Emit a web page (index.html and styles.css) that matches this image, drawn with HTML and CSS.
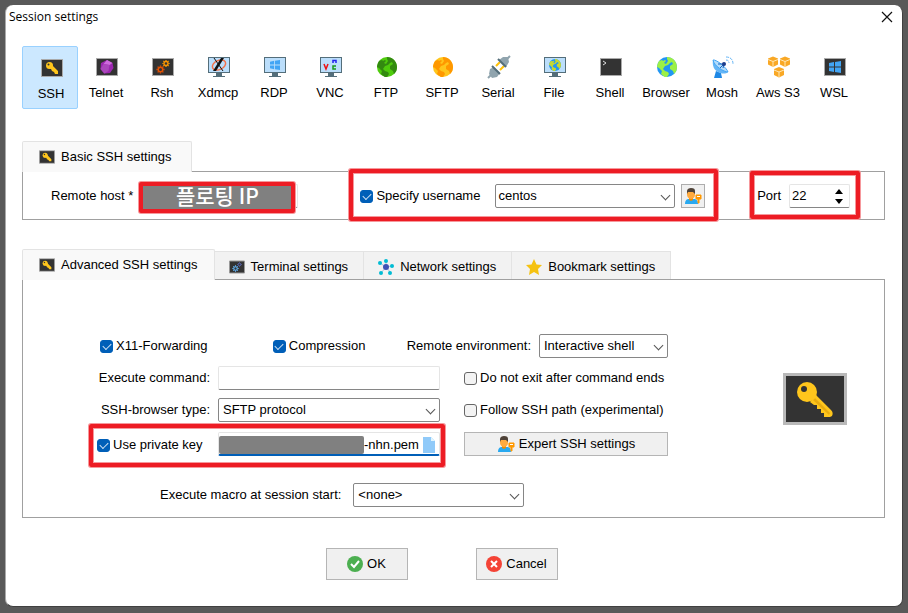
FILE: index.html
```html
<!DOCTYPE html>
<html lang="en">
<head>
<meta charset="UTF-8">
<meta name="viewport" content="width=device-width, initial-scale=1.0">
<title>Session settings</title>
<link rel="stylesheet" href="styles.css">
</head>
<body>

<!-- shared icon shapes -->
<svg class="symbols" width="0" height="0" aria-hidden="true">
  <symbol id="screen" viewBox="0 0 24 24">
    <rect x="1.5" y="3.5" width="21" height="17" fill="#333" stroke="#aaa"/>
  </symbol>
  <symbol id="monitor" viewBox="0 0 24 24">
    <path d="M9 18h6v3h3v1H6v-1h3z" fill="#546e7a"/>
    <rect x="1.5" y="2.5" width="21" height="15" fill="#bbdefb" stroke="#546e7a"/>
  </symbol>
  <symbol id="key" viewBox="0 0 64 52">
    <rect x="1.5" y="1.5" width="61" height="49" fill="#333" stroke="#b9b9b9" stroke-width="3"/>
    <path d="M33 22l15 15c2 2 2 4 1 6l-2 1h-6v-4h-3v-4h-4v-4h-3l-4-3z" fill="#ffc61c"/>
    <path d="M32 25l15 15-1 2-16-15z" fill="#e8ab10"/>
    <circle cx="24" cy="19" r="10" fill="#ffc61c"/>
    <circle cx="21" cy="16" r="3" fill="#333"/>
  </symbol>
  <symbol id="key-small" viewBox="0 0 22 18">
    <rect x=".5" y=".5" width="21" height="17" fill="#333" stroke="#aaa"/>
    <path d="M10 5l7 7v3h-3l-1-2-2-1-1-2-3-1z" fill="#ffc61c"/>
    <circle cx="8.500" cy="6.500" r="3.500" fill="#ffc61c"/>
    <circle cx="7.500" cy="5.500" r="1" fill="#333"/>
  </symbol>
  <symbol id="land" viewBox="0 0 20 20">
    <path d="M10 0c5 0 10 4 10 10 0 3-1 5-3 7l-1-3-3-2 0-3 3-2-1-2-2 1-2 2-3 1-2 3 2 2 3 1 1 2-2 3 0 2C7 19 5 18 4 17l1-3-3-3-2-1c0-2 1-4 2-6l3-1 1 1 2-1 1 1-2 2 2 1 2-3-1-2z"/>
  </symbol>
  <symbol id="gear" viewBox="0 0 10 10">
    <circle cx="5" cy="5" r="2.5" fill="none" stroke="currentColor" stroke-width="1.6"/>
    <path d="M5 .5v1.5M5 8v1.500M.5 5h1.500M8 5h1.500M1.800 1.800l1 1M7.200 7.200l1 1M8.200 1.800l-1 1M2.800 7.200l-1 1" stroke="currentColor" stroke-width="1.500"/>
  </symbol>
  <symbol id="user" viewBox="0 0 18 18">
    <path d="M1 17c0-4 2-5 4-5h5c2 0 4 1 4 5z" fill="#29a9f0"/>
    <path d="M5 10h4v3l-2 1-2-1z" fill="#f08c00"/>
    <path d="M3 5h8v3c0 2-2 4-4 4s-4-2-4-4z" fill="#ffab40"/>
    <path d="M3 7V4c0-2 2-3 4-3 3 0 4 1 4 3v3l-2-2H4z" fill="#4e4238"/>
    <path d="M12 8h5v4h-2v4h-1v-4h-2z" fill="#ff9800" stroke="#ff9800"/>
    <path d="M13 9h3v1h-3z" fill="#fff"/>
  </symbol>
  <symbol id="windows" viewBox="0 0 12 12">
    <path d="M0 2l5-1v4.500H0zM6 1l6-1v5.500H6zM0 6.500h5V11l-5-1zM6 6.500h6V12l-6-1z" fill="#42a5f5"/>
  </symbol>
</svg>

<main class="dialog">
  <header class="titlebar">
    <h1>Session settings</h1>
    <button type="button" class="close" aria-label="Close">
      <svg width="12" height="12" viewBox="0 0 12 12"><path d="M1 1l10 10M11 1L1 11" stroke="#111" stroke-width="1.200"/></svg>
    </button>
  </header>

  <form class="content">
    <nav class="session-types">
      <button type="button" class="type selected">
        <svg viewBox="0 0 24 24"><use href="#key-small" x="1" y="3" width="22" height="18"/></svg>
        SSH
      </button>
      <button type="button" class="type">
        <svg viewBox="0 0 24 24"><use href="#screen"/><path d="M12 5l5.500 3 1 5-3.500 5-6 .5L5.500 14l.5-6z" fill="#9c27b0"/><path d="M12 5l5.500 3-3 2-6-1z" fill="#ce6bdd"/><path d="M8.500 9l6 1-1 6-4 2.500-4-4.500z" fill="#ab47bc"/></svg>
        Telnet
      </button>
      <button type="button" class="type">
        <svg viewBox="0 0 24 24"><use href="#screen"/><use href="#gear" x="5" y="10" width="9" height="9" color="#e65100"/><use href="#gear" x="11" y="4.500" width="8" height="8" color="#ff9800"/></svg>
        Rsh
      </button>
      <button type="button" class="type">
        <svg viewBox="0 0 24 24"><use href="#monitor"/><ellipse cx="12" cy="10" rx="7" ry="4.500" transform="rotate(-25 12 10)" fill="none" stroke="#f4724b" stroke-width="1.500"/><path d="M14 3h3L9 16H6z" fill="#111"/><path d="M7 3l9 13" stroke="#111"/></svg>
        Xdmcp
      </button>
      <button type="button" class="type">
        <svg viewBox="0 0 24 24"><use href="#monitor"/><use href="#windows" x="7" y="5" width="10" height="10"/></svg>
        RDP
      </button>
      <button type="button" class="type">
        <svg viewBox="0 0 24 24"><use href="#monitor"/><path d="M5 9l2 5 2-5" fill="none" stroke="#e11" stroke-width="1.500"/><path d="M14 8V5.500h3V8" fill="none" stroke="#22e" stroke-width="1.500"/><path d="M17 11h-3v3h3" fill="none" stroke="#1a9a1a" stroke-width="1.500"/></svg>
        VNC
      </button>
      <button type="button" class="type">
        <svg viewBox="0 0 24 24"><circle cx="12" cy="12" r="10" fill="#4ecb0c"/><use href="#land" x="2" y="2" width="20" height="20" fill="#338a10"/></svg>
        FTP
      </button>
      <button type="button" class="type">
        <svg viewBox="0 0 24 24"><circle cx="12" cy="12" r="10" fill="#ffc61c"/><use href="#land" x="2" y="2" width="20" height="20" fill="#ff9800"/></svg>
        SFTP
      </button>
      <button type="button" class="type">
        <svg viewBox="0 0 24 24"><path d="M1 23l4-4M19 5l4-4" stroke="#90a4ae" stroke-width="2"/><path d="M9 11l4-4M13 15l4-4" stroke="#ffc107" stroke-width="2"/><path d="M3 14l4-2 6 6-3 4-5 1-3-4zM12 5l4-3 5 0 1 5-3 5z" fill="#90a4ae"/><path d="M5 11l8 8M11 4l8 8" stroke="#546e7a" stroke-width="2"/></svg>
        Serial
      </button>
      <button type="button" class="type">
        <svg viewBox="0 0 24 24"><use href="#monitor"/><circle cx="12" cy="10" r="6" fill="#2196f3"/><use href="#land" x="6" y="4" width="12" height="12" fill="#c6d82f"/></svg>
        File
      </button>
      <button type="button" class="type">
        <svg viewBox="0 0 24 24"><use href="#screen"/><path d="M4 6l3 2-3 2" fill="none" stroke="#ddd"/></svg>
        Shell
      </button>
      <button type="button" class="type">
        <svg viewBox="0 0 24 24"><circle cx="12" cy="12" r="10" fill="#2196f3"/><use href="#land" x="2" y="2" width="20" height="20" fill="#9cf046"/></svg>
        Browser
      </button>
      <button type="button" class="type">
        <svg viewBox="0 0 24 24"><path d="M5 16l5 2 1 5H3z" fill="#1e88e5"/><path d="M2 5c-1 5 1 10 5 12s8 2 10 0z" fill="#64b5f6"/><path d="M2 5c3-1 14 8 15 12-4 0-14-6-15-12z" fill="#b3dcfb" stroke="#42a5f5"/><path d="M7 9l6 0-1 4M13 9l-4 4" stroke="#1565c0" fill="none"/><circle cx="13" cy="9" r="2" fill="#1a3c8c"/><path d="M15 5c2 0 3 1 3 3M15 2c4 0 7 2 7 7" fill="none" stroke="#64b5f6" stroke-dasharray="3 1"/></svg>
        Mosh
      </button>
      <button type="button" class="type">
        <svg viewBox="0 0 24 24"><path d="M1 3.500l5-2 5 2v6l-5 2.500-5-2.500zM13 3.500l5-2 5 2v6L18 12l-5-2.500zM7 14l5-2 5 2v6l-5 2.500L7 20z" fill="#f9a825"/><path d="M1 4.500l5 2 5-2M6 6.500V12M13 4.500l5 2 5-2M18 6.500V12M7 15l5 2 5-2M12 17v5.500" fill="none" stroke="#ffe6b3"/></svg>
        Aws S3
      </button>
      <button type="button" class="type">
        <svg viewBox="0 0 24 24"><use href="#screen"/><use href="#windows" x="6" y="6" width="12" height="12"/></svg>
        WSL
      </button>
    </nav>

    <section class="basic">
      <div class="tabs">
        <button type="button" class="tab active"><svg width="16" height="16" viewBox="0 0 16 16"><use href="#key-small" y="1" width="16" height="14"/></svg>Basic SSH settings</button>
      </div>
      <div class="panel host-row">
        <label for="host">Remote host *</label>
        <div class="host-field">
          <input type="text" id="host" class="field">
          <span class="host-cover">플로팅 IP</span>
        </div>
        <div class="user-group mark">
          <label class="check"><input type="checkbox" checked> Specify username</label>
          <div class="select-box">
            <select aria-label="Username"><option>centos</option></select>
          </div>
          <button type="button" class="user-button" aria-label="Manage users"><svg width="18" height="18"><use href="#user"/></svg></button>
        </div>
        <div class="port-group mark">
          <label for="port">Port</label>
          <div class="spinner field">
            <input type="number" id="port" value="22">
            <div class="arrows">
              <button type="button" aria-label="Increase port"><svg width="8" height="5" viewBox="0 0 8 5"><path d="M0 5l4-5 4 5z"/></svg></button>
              <button type="button" aria-label="Decrease port"><svg width="8" height="5" viewBox="0 0 8 5"><path d="M0 0l4 5 4-5z"/></svg></button>
            </div>
          </div>
        </div>
      </div>
    </section>

    <section class="advanced">
      <div class="tabs">
        <button type="button" class="tab active"><svg width="16" height="16" viewBox="0 0 16 16"><use href="#key-small" y="1" width="16" height="14"/></svg>Advanced SSH settings</button>
        <button type="button" class="tab"><svg width="16" height="16" viewBox="0 0 16 16"><path d="M.5 2h15v12H.5z" fill="#333" stroke="#999"/><use href="#gear" x="3" y="6" width="7" height="7" color="#64b5f6"/><use href="#gear" x="8" y="3" width="5" height="5" color="#5c6bc0"/></svg>Terminal settings</button>
        <button type="button" class="tab"><svg width="16" height="16" viewBox="0 0 16 16"><path d="M8 8V2M8 8L2 4M8 8l-5 6M8 8l5 6M8 8l6-1" stroke="#a9c6dc"/><g fill="#00bcd4"><circle cx="8" cy="2" r="2"/><circle cx="2" cy="4" r="2"/><circle cx="3" cy="14" r="2"/><circle cx="12" cy="14" r="2"/><circle cx="14" cy="7" r="2"/></g><circle cx="8" cy="8" r="3" fill="#3f51b5"/></svg>Network settings</button>
        <button type="button" class="tab"><svg width="16" height="16" viewBox="0 0 16 16"><path d="M8 0l2.500 5.500 5.500.5-4 4 1 6-5-3-5 3 1-6-4-4 5.500-.5z" fill="#f5c211"/></svg>Bookmark settings</button>
      </div>
      <div class="panel advanced-panel">
        <div class="options">
          <div class="option-row">
            <label class="check"><input type="checkbox" checked> X11-Forwarding</label>
            <label class="check"><input type="checkbox" checked> Compression</label>
            <div class="environment">
              <label for="environment">Remote environment:</label>
              <div class="select-box">
                <select id="environment"><option>Interactive shell</option></select>
              </div>
            </div>
          </div>

          <div class="option-grid">
            <label for="command">Execute command:</label>
            <input type="text" id="command" class="field">
            <label class="check"><input type="checkbox"> Do not exit after command ends</label>

            <label for="browser">SSH-browser type:</label>
            <div class="select-box">
              <select id="browser"><option>SFTP protocol</option></select>
            </div>
            <label class="check"><input type="checkbox"> Follow SSH path (experimental)</label>
          </div>

          <div class="option-grid key-grid">
            <div class="key-group mark">
              <label class="check"><input type="checkbox" checked> Use private key</label>
              <div class="field key-field">
                <span class="redacted"></span>
                <input type="text" aria-label="Private key file" value="-nhn.pem">
                <button type="button" aria-label="Browse for key">
                  <svg width="14" height="16" viewBox="0 0 14 16"><path d="M1 0h8l4 4v12H1z" fill="#90caf9"/><path d="M9 0l4 4H9z" fill="#e1f5fe"/></svg>
                </button>
              </div>
            </div>
            <button type="button" class="button expert"><svg width="18" height="18"><use href="#user"/></svg>Expert SSH settings</button>
          </div>

          <div class="macro-row">
            <label for="macro">Execute macro at session start:</label>
            <div class="select-box">
              <select id="macro"><option>&lt;none&gt;</option></select>
            </div>
          </div>
        </div>
        <svg class="big-key" width="64" height="52"><use href="#key"/></svg>
      </div>
    </section>

    <footer class="actions">
      <button type="button" class="button"><svg width="16" height="16" viewBox="0 0 16 16"><circle cx="8" cy="8" r="8" fill="#4caf50"/><path d="M4 8l3 3 5-6" fill="none" stroke="#fff" stroke-width="2"/></svg>OK</button>
      <button type="button" class="button"><svg width="16" height="16" viewBox="0 0 16 16"><circle cx="8" cy="8" r="8" fill="#f44336"/><path d="M5 5l6 6M11 5l-6 6" stroke="#fff" stroke-width="2"/></svg>Cancel</button>
    </footer>
  </form>
</main>

</body>
</html>
```

FILE: styles.css
```css
* {
  box-sizing: border-box;
}

body {
  margin: 0;
  padding: 5px 5px 6px;
  background-color: #595959;
  font-family: "Liberation Sans", Arial, sans-serif;
  font-size: 13px;
  line-height: 16px;
  color: #000;
}

button,
input,
select {
  font: inherit;
  color: inherit;
  margin: 0;
}

button {
  padding: 0;
}

svg {
  display: block;
  flex: none;
}

label {
  white-space: nowrap;
}

.symbols {
  position: absolute;
}

.dialog {
  min-height: calc(100vh - 11px);
  background-color: #fff;
  border: 1px solid #404040;
  border-top: none;
  border-left-color: #aaa;
  border-radius: 8px;
}

.titlebar {
  display: flex;
  justify-content: space-between;
  align-items: center;
  height: 24px;
  padding: 0 9px 0 3px;
}

.titlebar h1 {
  margin: 0;
  font-family: "Open Sans", "Noto Sans", sans-serif;
  font-size: 12px;
  font-weight: normal;
}

.close {
  border: none;
  background: none;
}

.content {
  padding: 17px 17px 26px 16px;
}

/* session types */
.session-types {
  display: flex;
}

.type {
  display: flex;
  flex-direction: column;
  align-items: center;
  gap: 6px;
  width: 56px;
  height: 63px;
  padding-top: 8px;
  border: 1px solid transparent;
  border-radius: 2px;
  background: none;
  white-space: nowrap;
}

.type svg {
  width: 24px;
  height: 24px;
  margin-left: 2px;
}

.type.selected {
  padding-top: 9px;
  padding-left: 2px;
  background-color: #cce8ff;
  border-color: #99d1ff;
}

/* tabs and panels */
.basic {
  margin-top: 32px;
}

.advanced {
  margin-top: 29px;
}

.tabs {
  display: flex;
  align-items: flex-end;
  position: relative;
  margin-bottom: -1px;
}

.tab {
  display: flex;
  align-items: center;
  gap: 6px;
  height: 28px;
  margin-bottom: 1px;
  padding: 2px 15px 0 14px;
  border: 1px solid #e3e3e3;
  border-left: none;
  border-bottom: none;
  background-color: #f2f2f2;
  white-space: nowrap;
}

.tab.active {
  height: 31px;
  margin-bottom: 0;
  padding: 0 16px;
  border-left: 1px solid #e3e3e3;
  border-radius: 2px 2px 0 0;
  background-color: #f9f9f9;
}

.panel {
  border: 1px solid #a0a0a0;
}

/* form controls */
.field {
  height: 24px;
  padding: 0 4px;
  border: 1px solid #e5e5e5;
  border-bottom-color: #868686;
  border-radius: 2px;
  background-color: #fff;
}

.check {
  display: flex;
  align-items: center;
  gap: 3px;
}

.check input {
  appearance: none;
  display: flex;
  justify-content: center;
  align-items: center;
  flex: none;
  width: 13px;
  height: 13px;
  border: 1px solid #666;
  border-radius: 3px;
  background-color: #f3f3f3;
}

.check input:checked {
  border-color: #005fb8;
  background-color: #005fb8;
}

.check input:checked::before {
  content: "";
  width: 7px;
  height: 4px;
  margin-bottom: 2px;
  border-left: 1px solid #cfe2f3;
  border-bottom: 1px solid #cfe2f3;
  transform: rotate(-45deg);
}

.select-box {
  position: relative;
}

.select-box::after {
  content: "";
  position: absolute;
  top: 8px;
  right: 6px;
  width: 6px;
  height: 6px;
  border-right: 1px solid #555;
  border-bottom: 1px solid #555;
  transform: rotate(45deg);
  pointer-events: none;
}

.select-box select {
  appearance: none;
  display: block;
  width: 100%;
  height: 24px;
  padding: 0 18px 0 4px;
  border: 1px solid #868686;
  border-radius: 2px;
  background-color: #fff;
}

.button {
  display: flex;
  justify-content: center;
  align-items: center;
  gap: 4px;
  border: 1px solid #b5b5b5;
  background-color: #f0f0f0;
}

/* red highlight round a group */
.mark {
  position: relative;
}

.mark::after {
  content: "";
  position: absolute;
  inset: -15px -13px -13px -11px;
  border: 4px solid #ed1c24;
  border-radius: 2px;
  box-shadow: 0 0 0 1px #f6989c, inset 0 0 0 1px #f6989c;
  pointer-events: none;
}

/* basic settings */
.basic .tab {
  padding-right: 19px;
}

.host-row {
  display: flex;
  align-items: center;
  padding: 12px 34px 11px 28px;
}

.host-field {
  position: relative;
  width: 160px;
  margin-left: 5px;
}

.host-field .field {
  display: block;
  width: 100%;
}

.host-cover {
  position: absolute;
  inset: -2px 3px -5px 1px;
  border: 4px solid #ed1c24;
  border-radius: 2px;
  box-shadow: 0 0 0 1px #f6989c;
  background-color: #808080;
  color: #fff;
  font-family: "Noto Sans CJK KR", sans-serif;
  font-size: 21px;
  font-weight: 500;
  line-height: 18px;
  text-align: center;
}

.user-group {
  display: flex;
  align-items: center;
  flex: 1;
  margin-left: 62px;
}

.user-group .select-box {
  flex: 1;
  margin: 0 6px 0 15px;
}

.user-group select {
  padding-left: 2px;
}

.user-button {
  display: grid;
  place-items: center;
  width: 24px;
  height: 24px;
  border: 1px solid #adadad;
  background-color: #f0f0f0;
}

.port-group {
  display: flex;
  align-items: center;
  gap: 8px;
  margin-left: 52px;
}

.port-group::after {
  inset: -13px -10px -11px -7px;
}

.spinner {
  display: flex;
  align-items: center;
  width: 61px;
  padding: 0 6px 0 2px;
}

.spinner input {
  appearance: textfield;
  flex: 1;
  min-width: 0;
  padding: 0;
  border: none;
}

.spinner input::-webkit-inner-spin-button {
  appearance: none;
}

.arrows {
  display: grid;
  gap: 5px;
}

.arrows button {
  border: none;
  background: none;
}

/* advanced settings */
.advanced-panel {
  display: flex;
  justify-content: space-between;
  align-items: flex-start;
  padding: 54px 37px 10px 74px;
}

.option-row {
  display: flex;
  justify-content: space-between;
  padding-left: 3px;
}

.environment {
  display: flex;
  align-items: center;
  gap: 8px;
}

.environment .select-box {
  width: 129px;
}

.option-row .check:first-child {
  margin-right: 24px;
}

.option-grid {
  display: grid;
  grid-template-columns: 113px 222px 220px;
  gap: 8px;
  align-items: center;
  margin-top: 8px;
}

.option-grid > label:not(.check) {
  text-align: right;
}

.option-grid > :nth-child(3n) {
  margin-left: 16px;
}

.key-grid {
  margin-top: 10px;
}

.key-group {
  grid-column: span 2;
  display: flex;
  align-items: center;
  justify-content: space-between;
}

.key-group::after {
  inset: -8px -5px -11px -8px;
}

.key-group .check {
  padding-top: 2px;
}

.key-field {
  display: flex;
  align-items: center;
  width: 222px;
  padding: 3px 3px 0 0;
  border-bottom: 2px solid #005fb8;
}

.key-field input {
  flex: 1;
  min-width: 0;
  padding: 0;
  border: none;
}

.key-field button {
  border: none;
  background: none;
}

.redacted {
  width: 145px;
  height: 18px;
  border-radius: 2px;
  background-color: #808080;
}

.expert {
  height: 24px;
  margin-left: 16px;
}

.macro-row {
  display: flex;
  align-items: center;
  gap: 12px;
  margin-top: 27px;
  padding-left: 63px;
}

.macro-row .select-box {
  width: 171px;
}

.big-key {
  margin-top: 39px;
}

/* dialog buttons */
.actions {
  display: flex;
  justify-content: center;
  gap: 68px;
  margin-top: 30px;
  padding-right: 24px;
}

.actions .button {
  width: 82px;
  height: 32px;
}
```
